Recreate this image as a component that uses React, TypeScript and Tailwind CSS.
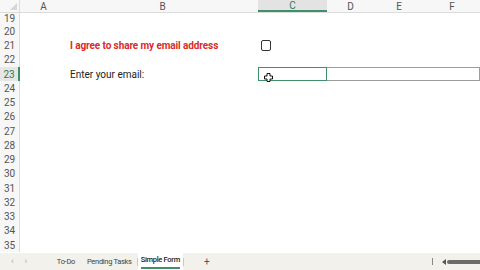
import React from "react";

const cols = [
  { name: "A", w: 47 },
  { name: "B", w: 191 },
  { name: "C", w: 69 },
  { name: "D", w: 47 },
  { name: "E", w: 50 },
  { name: "F", w: 56 },
];

const rows = Array.from({ length: 17 }, (_, i) => 19 + i);

function MoveCursor() {
  return (
    <svg width="9" height="9" viewBox="0 0 9 9" className="absolute left-[5px] top-[5px]">
      <path
        d="M3 0.5h3v2.5h2.5v3h-2.5v2.5h-3v-2.5h-2.5v-3h2.5z"
        fill="#fff"
        stroke="#111"
        strokeWidth="1"
      />
    </svg>
  );
}

function Row({ n }: { n: number }) {
  const active = n === 23;
  // first row is partly scrolled under the header
  const h = n === 19 ? "h-[11.25px]" : "h-[14.25px]";
  return (
    <div className={`flex shrink-0 ${h}`}>
      <div
        className={
          active
            ? "flex w-[20px] shrink-0 items-center justify-center border-r-2 border-[#3f8f6a] bg-[#e6e6e6] text-[10px] text-[#2f7a57]"
            : "flex w-[20px] shrink-0 items-center justify-center border-r border-[#dcdcdc] bg-[#f7f7f7] text-[10px] text-[#555]"
        }
      >
        {n}
      </div>
      <div className="w-[47px] shrink-0" />
      <div className="flex w-[191px] shrink-0 items-center pl-[3px]">
        {n === 21 && <span className="text-[10px] font-bold tracking-[-0.1px] text-[#d92b2b]">I agree to share my email address</span>}
        {n === 23 && <span className="text-[10px] text-[#222]">Enter your email:</span>}
      </div>
      {n === 21 && (
        <div className="flex w-[69px] shrink-0 items-center pl-[3px]">
          <div className="h-[11px] w-[10px] rounded-[2px] border-[1.5px] border-[#333]" />
        </div>
      )}
      {active && (
        <>
          <div className="relative w-[69px] shrink-0 border border-[#3f8f6a]">
            <MoveCursor />
          </div>
          <div className="w-[153px] shrink-0 border border-l-0 border-[#9d9d9d]" />
        </>
      )}
    </div>
  );
}

export default function App() {
  return (
    <div className="flex h-[270px] w-[480px] flex-col overflow-hidden bg-white font-['Roboto',sans-serif]">
      {/* column headers */}
      <div className="relative z-10 flex h-[13px] shrink-0 border-b border-[#dcdcdc] bg-[#f7f7f7]">
        <div className="relative w-[20px] shrink-0 border-r border-[#dcdcdc]">
          <div className="absolute bottom-[2px] right-[2px] h-0 w-0 border-b-[7px] border-l-[7px] border-b-[#d6d6d6] border-l-transparent" />
        </div>
        {cols.map((c) =>
          c.name === "C" ? (
            <div
              key={c.name}
              style={{ width: c.w }}
              className="flex shrink-0 items-center justify-center border-b-2 border-[#3f8f6a] bg-[#e3e3e3] text-[10px] text-[#2f7a57]"
            >
              {c.name}
            </div>
          ) : (
            <div
              key={c.name}
              style={{ width: c.w }}
              className="flex shrink-0 items-center justify-center text-[10px] text-[#555]"
            >
              {c.name}
            </div>
          )
        )}
      </div>

      {/* grid body */}
      <div className="flex min-h-0 flex-1 flex-col overflow-hidden">
        {rows.map((n) => (
          <Row key={n} n={n} />
        ))}
      </div>

      {/* sheet tabs */}
      <div className="flex h-[17px] shrink-0 items-center bg-[#f2f1ec] text-[7.5px] tracking-[-0.3px] text-[#444]">
        <span className="ml-[11px] text-[9px] text-[#aaa]">‹</span>
        <span className="ml-[11px] text-[9px] text-[#aaa]">›</span>
        <span className="ml-[30px]">To-Do</span>
        <span className="ml-[12px]">Pending Tasks</span>
        <span className="ml-[5px] h-[8px] w-px bg-[#c8c8c8]" />
        <div className="flex h-full items-center bg-white px-[3px]">
          <span className="border-b-2 border-[#3f8f6a] pb-px font-medium text-[#222]">Simple Form</span>
        </div>
        <span className="h-[8px] w-px bg-[#c8c8c8]" />
        <span className="ml-[20px] text-[10px] text-[#555]">+</span>
        <div className="ml-auto flex items-center">
          <span className="h-[7px] w-px bg-[#888]" />
          <span className="ml-[9px] h-0 w-0 border-y-[3px] border-r-[4px] border-y-transparent border-r-[#555]" />
          <span className="ml-[1px] h-[4px] w-[33px] rounded-l-full bg-[#6b6b6b]" />
        </div>
      </div>
    </div>
  );
}
